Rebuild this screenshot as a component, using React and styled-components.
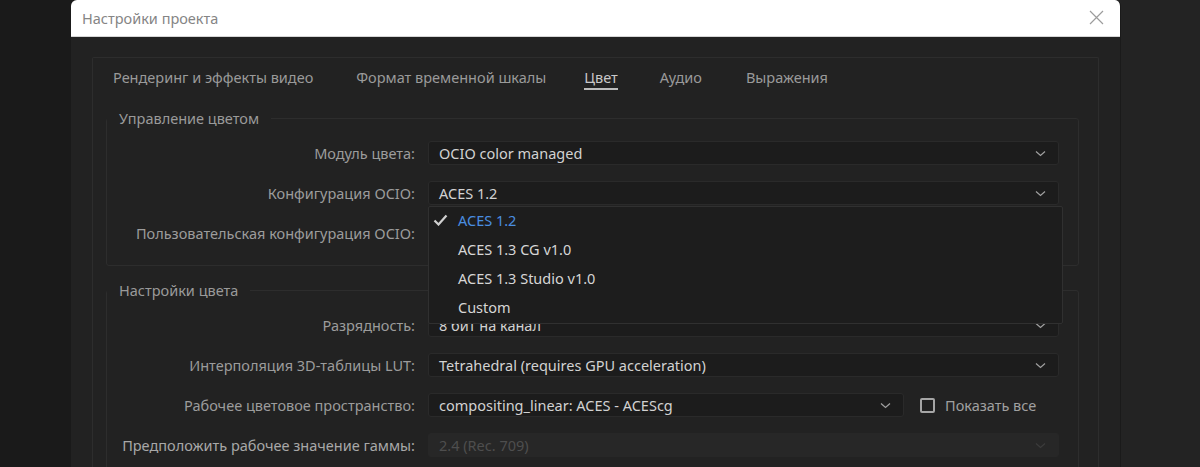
import React from 'react';
import styled, { createGlobalStyle } from 'styled-components';

const GlobalStyle = createGlobalStyle`
  html, body {
    margin: 0;
    padding: 0;
    height: 467px;
    overflow: hidden;
    background: linear-gradient(to right, #1a1a1a 50%, #232323 50%);
    font-family: "Noto Sans", "Open Sans", sans-serif;
    font-size: 14.5px;
  }
  * {
    box-sizing: border-box;
  }
`;

const Page = styled.div`
  height: 467px;
  padding-left: 71px;
  display: flex;
`;

const Dialog = styled.div`
  width: 1050px;
  height: 100%;
  display: flex;
  flex-direction: column;
  background: #222222;
  border-radius: 6px 6px 0 0;
  overflow: hidden;
  border-right: 1px solid #1a1a1a;
`;

const TitleBar = styled.div`
  height: 37px;
  flex-shrink: 0;
  display: flex;
  align-items: center;
  justify-content: space-between;
  padding: 0 16px 0 11px;
  background: #ffffff;
  border-bottom: 1px solid #d6d6d6;
  color: #858585;
  font-size: 14.5px;
`;

const CloseButton = styled.div`
  width: 16px;
  height: 16px;
  display: flex;
  align-items: center;
  justify-content: center;
  margin-top: -2px;
`;

const Body = styled.div`
  flex: 1;
  padding: 20px 21px 0;
`;

const Panel = styled.div`
  height: 100%;
  border: 1px solid #2d2d2d;
  border-bottom: none;
  border-radius: 2px 2px 0 0;
`;

const TabBar = styled.div`
  display: flex;
  padding-left: 20px;
`;

const Tab = styled.div`
  margin-right: ${(p) => p.$gap}px;
  padding: 9px 0 1px;
  line-height: 20px;
  color: ${(p) => (p.$active ? '#c9c9c9' : '#9a9a9a')};
  border-bottom: 2px solid ${(p) => (p.$active ? '#bdbdbd' : 'transparent')};
`;

const Group = styled.fieldset`
  margin: ${(p) => p.$top}px 19px 0 13px;
  padding: 13px 19px ${(p) => p.$bottom}px 0;
  border: 1px solid #2d2d2d;
  border-radius: 3px;
  min-width: 0;
`;

const Legend = styled.legend`
  margin-left: 0;
  padding: 0 12px;
  line-height: 20px;
  color: #9a9a9a;
`;

const Rows = styled.div`
  display: grid;
  grid-template-columns: 308px 1fr;
  column-gap: 13px;
  row-gap: ${(p) => p.$gap}px;
  align-items: center;
`;

const Label = styled.div`
  text-align: right;
  white-space: nowrap;
  color: ${(p) => (p.$bright ? '#a8a8a8' : '#9c9c9c')};
`;

const Field = styled.div`
  position: relative;
  display: flex;
  align-items: center;
  gap: 16px;
`;

const Select = styled.div`
  flex: 1;
  height: 24px;
  display: flex;
  align-items: center;
  justify-content: space-between;
  padding: 0 10px;
  background: ${(p) => (p.$disabled ? '#272727' : '#1c1c1c')};
  border: 1px solid ${(p) => (p.$disabled ? '#272727' : '#2a2a2a')};
  border-radius: 3px;
  color: ${(p) => (p.$disabled ? '#4e4e4e' : '#d2d2d2')};
  white-space: nowrap;
`;

const Chevron = styled.svg`
  flex-shrink: 0;
  margin-right: 2px;
`;

const Popup = styled.div`
  position: absolute;
  top: 25px;
  left: 0;
  width: 635px;
  z-index: 5;
  background: #1d1d1d;
  border: 1px solid #303030;
  border-radius: 2px;
`;

const Option = styled.div`
  position: relative;
  height: 29px;
  display: flex;
  align-items: center;
  padding: 0 0 3px 29px;
  color: ${(p) => (p.$selected ? '#4a8ee0' : '#d6d6d6')};
`;

const Check = styled.svg`
  position: absolute;
  left: 4px;
  top: 7px;
`;

const CheckWrap = styled.label`
  width: 139px;
  display: flex;
  align-items: center;
  gap: 10px;
  color: #a0a0a0;
  white-space: nowrap;
`;

const CheckBox = styled.span`
  width: 15px;
  height: 15px;
  flex-shrink: 0;
  border: 2px solid #a6a6a6;
  border-radius: 2px;
`;

const ChevronIcon = ({ dim }) => (
  <Chevron width="11" height="7" viewBox="0 0 11 7">
    <path
      d="M1 1.5l4.5 4L10 1.5"
      fill="none"
      stroke={dim ? '#3c3c3c' : '#a0a0a0'}
      strokeWidth="1.2"
    />
  </Chevron>
);

const tabs = [
  { label: 'Рендеринг и эффекты видео', gap: 43 },
  { label: 'Формат временной шкалы', gap: 38 },
  { label: 'Цвет', gap: 42 },
  { label: 'Аудио', gap: 44 },
  { label: 'Выражения', gap: 0 },
];

const ocioOptions = ['ACES 1.2', 'ACES 1.3 CG v1.0', 'ACES 1.3 Studio v1.0', 'Custom'];

const App = () => {
  return (
    <>
      <GlobalStyle />
      <Page>
        <Dialog>
          <TitleBar>
            <span>Настройки проекта</span>
            <CloseButton>
              <svg width="15" height="15" viewBox="0 0 15 15">
                <path d="M1 1l13 13M14 1L1 14" stroke="#9c9c9c" strokeWidth="1.2" />
              </svg>
            </CloseButton>
          </TitleBar>
          <Body>
            <Panel>
              <TabBar>
                {tabs.map((t) => (
                  <Tab key={t.label} $gap={t.gap} $active={t.label === 'Цвет'}>
                    {t.label}
                  </Tab>
                ))}
              </TabBar>

              <Group $top={18} $bottom={20}>
                <Legend>Управление цветом</Legend>
                <Rows $gap={16}>
                  <Label>Модуль цвета:</Label>
                  <Field>
                    <Select>
                      OCIO color managed
                      <ChevronIcon />
                    </Select>
                  </Field>

                  <Label>Конфигурация OCIO:</Label>
                  <Field>
                    <Select>
                      ACES 1.2
                      <ChevronIcon />
                    </Select>
                    <Popup>
                      {ocioOptions.map((o, i) => (
                        <Option key={o} $selected={i === 0}>
                          {i === 0 && (
                            <Check width="15" height="12" viewBox="0 0 15 12">
                              <path
                                d="M1.5 6.5l4 4L13.5 1.5"
                                fill="none"
                                stroke="#d0d0d0"
                                strokeWidth="2.2"
                              />
                            </Check>
                          )}
                          {o}
                        </Option>
                      ))}
                    </Popup>
                  </Field>

                  <Label>Пользовательская конфигурация OCIO:</Label>
                  <Field>
                    <Select />
                  </Field>
                </Rows>
              </Group>

              <Group $top={14} $bottom={20}>
                <Legend>Настройки цвета</Legend>
                <Rows $gap={16}>
                  <Label>Разрядность:</Label>
                  <Field>
                    <Select>
                      8 бит на канал
                      <ChevronIcon />
                    </Select>
                  </Field>

                  <Label>Интерполяция 3D-таблицы LUT:</Label>
                  <Field>
                    <Select>
                      Tetrahedral (requires GPU acceleration)
                      <ChevronIcon />
                    </Select>
                  </Field>

                  <Label>Рабочее цветовое пространство:</Label>
                  <Field>
                    <Select>
                      compositing_linear: ACES - ACEScg
                      <ChevronIcon />
                    </Select>
                    <CheckWrap>
                      <CheckBox />
                      Показать все
                    </CheckWrap>
                  </Field>

                  <Label $bright>Предположить рабочее значение гаммы:</Label>
                  <Field>
                    <Select $disabled>
                      2.4 (Rec. 709)
                      <ChevronIcon dim />
                    </Select>
                  </Field>
                </Rows>
              </Group>
            </Panel>
          </Body>
        </Dialog>
      </Page>
    </>
  );
};

export default App;
